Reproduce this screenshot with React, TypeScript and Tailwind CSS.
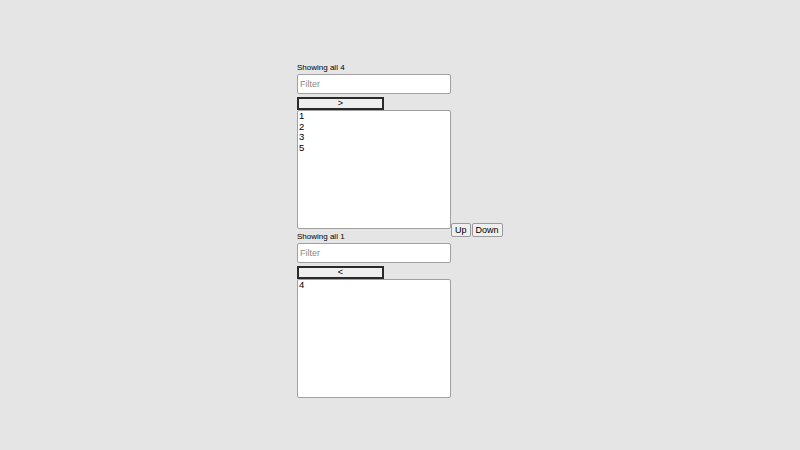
import React from 'react';

interface BoxProps {
  count: number;
  arrow: string;
  items: string[];
}

function ListBox({ count, arrow, items }: BoxProps) {
  return (
    <div className="flex flex-col w-[154px]">
      <div className="text-[8px] leading-[10px] text-black h-[10px]">Showing all {count}</div>
      <input
        type="text"
        placeholder="Filter"
        className="mt-[1px] h-[20px] w-full bg-white border border-[#a0a0a0] rounded-[2px] px-[2px] text-[9px] placeholder:text-[#8a8a8a] outline-none"
      />
      <button className="mt-[3px] h-[13px] w-[87px] bg-[#efefef] border-2 border-[#2a2a2a] text-[9px] leading-[9px] flex items-center justify-center">
        {arrow}
      </button>
      <div className="h-[119px] w-full bg-white border border-[#a0a0a0] rounded-[2px] px-[1px] text-[9.5px] leading-[10.5px]">
        {items.map((it) => (
          <div key={it}>{it}</div>
        ))}
      </div>
    </div>
  );
}

export default function App() {
  return (
    <div className="w-[800px] h-[450px] bg-[#e5e5e5] pt-[63px] pl-[297px]" style={{ fontFamily: '"Liberation Sans", Arial, sans-serif' }}>
      <div className="flex items-center">
        <div className="flex flex-col gap-[3px]">
          <ListBox count={4} arrow=">" items={['1', '2', '3', '5']} />
          <ListBox count={1} arrow="<" items={['4']} />
        </div>
        <div className="flex gap-[1px] mt-[-1px]">
          <button className="h-[14px] px-[3px] bg-[#efefef] border border-[#9a9a9a] rounded-[2px] text-[9px] leading-[9px]">Up</button>
          <button className="h-[14px] px-[3px] bg-[#efefef] border border-[#9a9a9a] rounded-[2px] text-[9px] leading-[9px]">Down</button>
        </div>
      </div>
    </div>
  );
}
